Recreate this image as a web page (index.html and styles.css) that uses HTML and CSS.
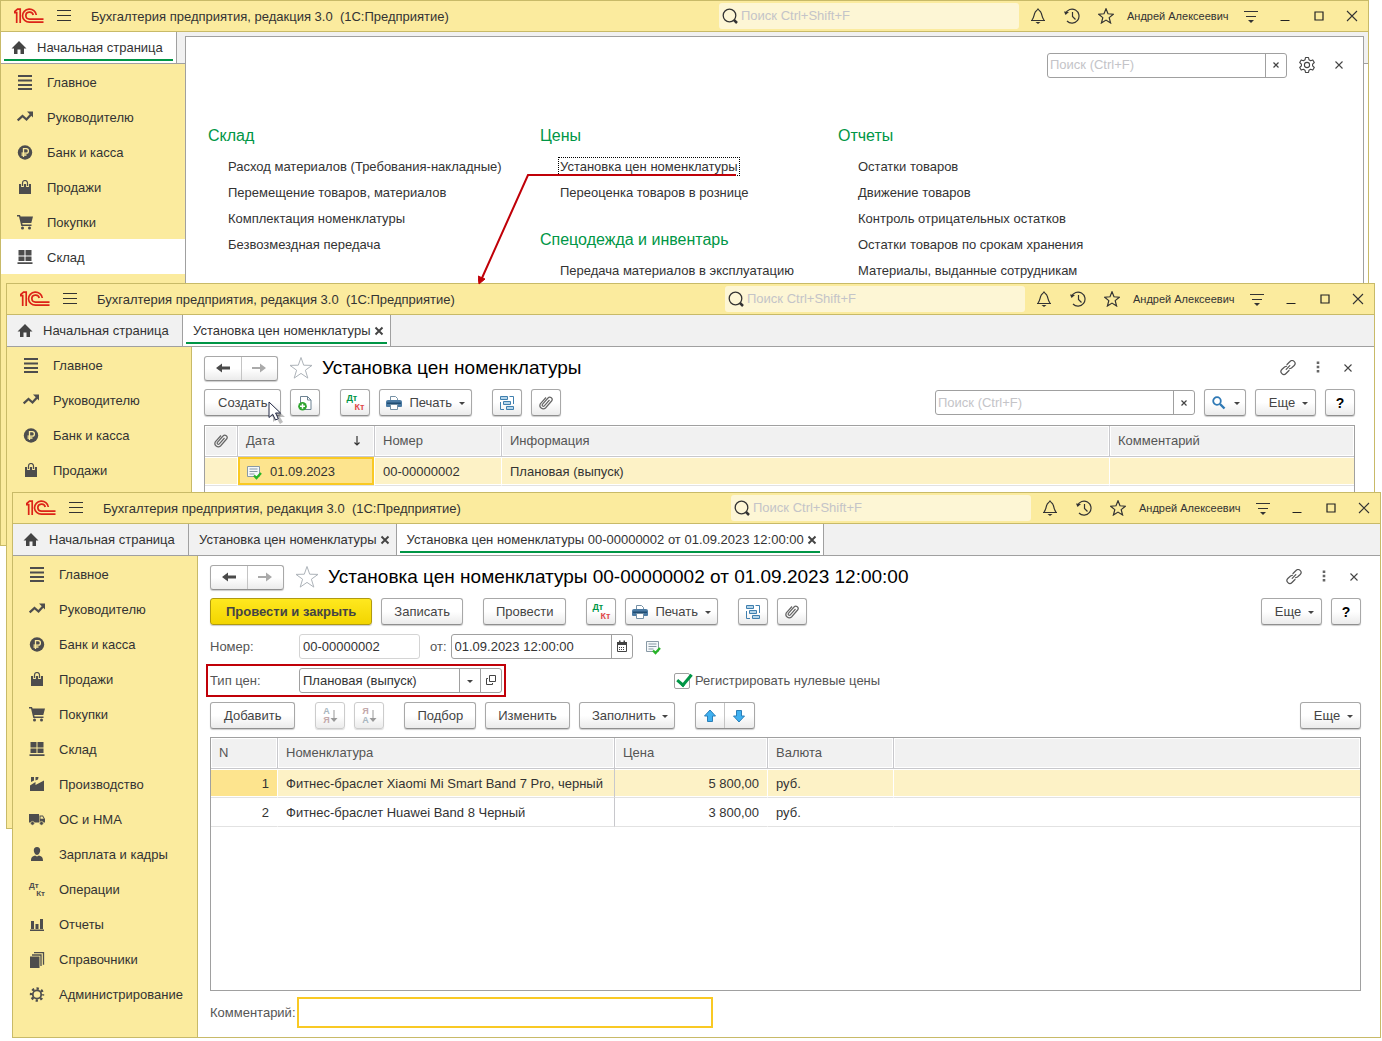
FILE: index.html
```html
<!DOCTYPE html>
<html lang="ru">
<head>
<meta charset="utf-8">
<title>Бухгалтерия предприятия</title>
<link rel="stylesheet" href="styles.css">
</head>
<body>
<svg class="sprite" aria-hidden="true">
  <symbol id="logo" viewBox="0 0 30 16"><g fill="none" stroke="#dc2318" stroke-width="1.700"><path d="M0 4.700h2.700V15M0 4.200L3.600 1.200H6.200V15"/><path d="M22.300 7A6.900 6.500 0 1 0 15.500 14.200H29.500"/><path d="M19.200 7A3.700 3.500 0 1 0 15.500 11.100H29.500"/></g></symbol>
  <symbol id="burger" viewBox="0 0 16 16"><path d="M1 2.500h14M1 7.500h14M1 12.500h14" stroke="#333"/></symbol>
  <symbol id="lens" viewBox="0 0 16 16"><g fill="none" stroke="#333"><circle cx="7.500" cy="7.500" r="6.300" stroke-width="1.300"/><path d="M12 12l3 3" stroke-width="2.500"/></g></symbol>
  <symbol id="bell" viewBox="0 0 16 16"><path d="M1 12.500h14M2 12C4 10 4 6.500 5 4.500 5.700 3 7 2.500 8 1c1 1.500 2.300 2 3 3.500 1 2 1 5.500 3 7.500" fill="none" stroke="#333" stroke-width="1.200"/><path d="M5.500 14h5L8 16z" fill="#333"/></symbol>
  <symbol id="history" viewBox="0 0 16 16"><path d="M1.500 5.500A7 7 0 1 1 3 13M8.500 4v4.500l3 3" fill="none" stroke="#333" stroke-width="1.200"/><path d="M0 3.500l5 .5-3.500 3z" fill="#333"/></symbol>
  <symbol id="star" viewBox="0 0 16 16"><path d="M8 .8l2 5 5.300.4-4.100 3.400 1.400 5.400L8 12.100 3.400 15l1.400-5.400L.7 6.200 6 5.800z" fill="none" stroke="currentColor" stroke-width="1.200"/></symbol>
  <symbol id="bigstar" viewBox="0 0 24 24"><path d="M12 1.500l2.700 7.700 8.300.2-6.600 4.800 2.400 7.900L12 17.400l-6.800 4.700 2.400-7.900L1 9.400l8.300-.2z" fill="none" stroke="#adb3b9"/></symbol>
  <symbol id="funnel" viewBox="0 0 16 16"><path d="M1 3.500h14M3 8.500h10" stroke="#333"/><path d="M5 12h6l-3 3z" fill="#333"/></symbol>
  <symbol id="min" viewBox="0 0 16 16"><path d="M3.500 12.500h9" stroke="#222"/></symbol>
  <symbol id="max" viewBox="0 0 16 16"><path d="M4 4h8v8H4z" fill="none" stroke="#222" stroke-width="1.200"/></symbol>
  <symbol id="close" viewBox="0 0 16 16"><path d="M3 3l10 10M13 3L3 13" stroke="#333" stroke-width="1.100"/></symbol>
  <symbol id="x" viewBox="0 0 16 16"><path d="M4.500 4.500l7 7M11.500 4.500l-7 7" stroke="#444" stroke-width="1.100"/></symbol>
  <symbol id="xs" viewBox="0 0 16 16"><path d="M5.500 5.500l5 5M10.500 5.500l-5 5" stroke="#444" stroke-width="1.200"/></symbol>
  <symbol id="xb" viewBox="0 0 16 16"><path d="M4.500 4.500l7 7M11.500 4.500l-7 7" stroke="#444" stroke-width="1.900"/></symbol>
  <symbol id="home" viewBox="0 0 16 16"><path d="M8 1l7.500 7.500H13V14H9.500V9.500h-3V14H3V8.500H.5z" fill="#444"/></symbol>
  <symbol id="list" viewBox="0 0 16 16"><path d="M1 1h14M1 5.500h14M1 10h14M1 14h14" stroke="#4d4d4d" stroke-width="2"/></symbol>
  <symbol id="trend" viewBox="0 0 16 16"><path d="M.7 10.500L5.500 6l4 3.500L14 4.500" fill="none" stroke="#4d4d4d" stroke-width="2.300"/><path d="M10 1.500h6v6z" fill="#4d4d4d"/></symbol>
  <symbol id="ruble" viewBox="0 0 16 16"><circle cx="8" cy="7.500" r="7.200" fill="#4d4d4d"/><path d="M6.500 12V3.700h2.700a2.200 2.200 0 0 1 0 4.400H4.500M4.500 10h5" fill="none" stroke="#fbeb9e" stroke-width="1.300"/></symbol>
  <symbol id="bag" viewBox="0 0 16 16"><path d="M2 4h12v10H2z" fill="#4d4d4d"/><path d="M5.500 7V3a2.500 2.500 0 0 1 5 0v4" fill="none" stroke="#fbeb9e" stroke-width="2.800"/><path d="M5.500 6V3a2.500 2.500 0 0 1 5 0v3" fill="none" stroke="#4d4d4d" stroke-width="1.200"/></symbol>
  <symbol id="cart" viewBox="0 0 16 16"><path d="M0 0h3l.6 1.500H16L14.300 8H5.200l.4 1.500h8.900V11H4.300L2 1.500H0z" fill="#4d4d4d"/><circle cx="5.500" cy="13" r="1.500" fill="#4d4d4d"/><circle cx="12.500" cy="13" r="1.500" fill="#4d4d4d"/></symbol>
  <symbol id="boxes" viewBox="0 0 16 16"><path d="M1.500 0h6v5.500h-6zM8.500 0h6v5.500h-6zM1.500 6.500h6V11h-6zM8.500 6.500h6V11h-6zM.5 12.300h15V14H.5z" fill="#4d4d4d"/></symbol>
  <symbol id="factory" viewBox="0 0 16 16"><path d="M1 8.500L6.500 5v3L15 3.500V14H1zM2 0h3v3.500L2 5zM6.500 0h3L9 2.500 6.500 3.500z" fill="#4d4d4d"/></symbol>
  <symbol id="truck" viewBox="0 0 16 16"><path d="M0 2h10v8.500H0zM10.500 3.500H14l2 3.500v3.500h-5.500z" fill="#4d4d4d"/><path d="M11.500 4.500h2l1.200 2.300h-3.200z" fill="#fbeb9e"/><circle cx="3.500" cy="11.300" r="1.900" fill="#4d4d4d" stroke="#fbeb9e" stroke-width=".6"/><circle cx="12.500" cy="11.300" r="1.900" fill="#4d4d4d" stroke="#fbeb9e" stroke-width=".6"/></symbol>
  <symbol id="person" viewBox="0 0 16 16"><path d="M8 0c2.200 0 3.200 1.300 3.200 3.300S10 8 8 8 4.800 5.300 4.800 3.300 5.800 0 8 0zM2 14c0-3.500 1-4.500 4-5.500l2 1 2-1c3 1 4 2 4 5.500z" fill="#4d4d4d"/></symbol>
  <symbol id="bars" viewBox="0 0 16 16"><path d="M1 12.500h14V14H1zM2 4h3v8H2zM6.500 7h3v5h-3zM11 2h3v10h-3z" fill="#4d4d4d"/></symbol>
  <symbol id="books" viewBox="0 0 16 16"><path d="M1 4.500h9.500V16H1z" fill="#4d4d4d"/><path d="M3 3h9v11M5 .7h9.500v12" fill="none" stroke="#4d4d4d" stroke-width="1.300"/></symbol>
  <symbol id="cog" viewBox="0 0 16 16"><circle cx="8" cy="7.500" r="6" fill="none" stroke="#4d4d4d" stroke-width="2.400" stroke-dasharray="2.350 2.362" stroke-dashoffset="1.200"/><circle cx="8" cy="7.500" r="4.200" fill="none" stroke="#4d4d4d" stroke-width="1.800"/></symbol>
  <symbol id="gear" viewBox="0 0 18 18"><g fill="none" stroke="#444" stroke-width="1.100" stroke-linejoin="round"><path d="M7.500 1.500h3l.5 2.300 1.600.9 2.200-.8 1.500 2.600-1.700 1.600v1.800l1.700 1.600-1.500 2.600-2.200-.8-1.600.9-.5 2.300h-3L7 14.200l-1.600-.9-2.200.8-1.500-2.600 1.700-1.600V8.100L1.700 6.500l1.500-2.600 2.200.8L7 3.800z"/><circle cx="9" cy="9" r="2.600"/></g></symbol>
  <symbol id="left" viewBox="0 0 16 16"><path d="M1 8l6-4.500v3h8v3H7v3z" fill="#4a4a4a"/></symbol>
  <symbol id="right" viewBox="0 0 16 16"><path d="M15 8L9 3.500V7H1v2h8v3.500z" fill="#aaa"/></symbol>
  <symbol id="link" viewBox="0 0 16 16"><g fill="none" stroke="#555" stroke-width="1.200" stroke-linecap="round"><path d="M7 4.500l3-3a2.900 2.900 0 0 1 4.200 4L11.500 8l-2 .7M9 10.500l-3 3a2.900 2.900 0 0 1-4.200-4L4.500 7l2-.7M6.200 9.300L9.800 5.700"/></g></symbol>
  <symbol id="dots" viewBox="0 0 16 16"><path d="M6.700 1.500h2.600v2.600H6.700zM6.700 5.700h2.600v2.600H6.700zM6.700 9.900h2.600v2.600H6.700z" fill="#666"/></symbol>
  <symbol id="newdoc" viewBox="0 0 16 16"><path d="M3.500 1.500h7L14 5v9.500H3.500zM10.500 1.500V5H14" fill="#fff" stroke="#6d8292"/><circle cx="5.500" cy="11.300" r="4.300" fill="#2fa52f"/><path d="M5.500 8.800v5M3 11.300h5" stroke="#fff" stroke-width="1.500"/></symbol>
  <symbol id="printer" viewBox="0 0 16 16"><path d="M4.500 6V1.500h5l2 2V6" fill="#fff" stroke="#7590a5"/><path d="M2 5h12a2 2 0 0 1 2 2v4a1 1 0 0 1-1 1H1a1 1 0 0 1-1-1V7a2 2 0 0 1 2-2z" fill="#4a7aa3"/><path d="M1 7.500h14V9H1z" fill="#204d72"/><path d="M4.500 9.500h7v5h-7z" fill="#fff" stroke="#7590a5"/></symbol>
  <symbol id="tree" viewBox="0 0 16 16"><g fill="#b5d5ea" stroke="#3f7fae"><path d="M1.500 1.500h7v3h-7zM4.500 6.500h7v3h-7zM7.500 11.500h7v3h-7z"/><path d="M10.500 1.500h4V9M1.500 7v7.500H5" fill="none"/></g></symbol>
  <symbol id="clip" viewBox="0 0 16 16"><path d="M11.500 5L6.300 10.800a1.200 1.200 0 0 1-1.900-1.500L10 3a2.300 2.300 0 0 1 3.600 3L7.500 13a3.400 3.400 0 0 1-5.200-4.200L8 2.500" fill="none" stroke="#666" stroke-width="1.200"/></symbol>
  <symbol id="find" viewBox="0 0 16 16"><circle cx="6" cy="6" r="3.800" fill="none" stroke="#2f79b5" stroke-width="1.800"/><path d="M9 9l4.500 4.500" stroke="#2f79b5" stroke-width="2.400"/></symbol>
  <symbol id="posted" viewBox="0 0 16 16"><path d="M1.500 2.500h12v10h-12z" fill="#f5f8fa" stroke="#8899a5"/><path d="M3.500 5h8M3.500 7.500h8M3.500 10h5" stroke="#8899a5"/><path d="M8 11.500l2.500 2.500L15 9" fill="none" stroke="#28b428" stroke-width="2.300"/></symbol>
  <symbol id="caret" viewBox="0 0 6 16"><path d="M0 7h6L3 10z" fill="#444"/></symbol>
  <symbol id="cal" viewBox="0 0 16 16"><path d="M3.500 3.500h9v9h-9z" fill="#fff" stroke="#444"/><path d="M3 3h10v3H3zM5 1.500h1.500V4H5zM9.500 1.500H11V4H9.500z" fill="#444"/><path d="M5 8.500h6M5 10.500h6" stroke="#444" stroke-dasharray="1 1"/></symbol>
  <symbol id="open" viewBox="0 0 16 16"><path d="M6.500 2.500h6v6h-6zM5 5.500H3.500v6h6V10" fill="none" stroke="#444"/></symbol>
  <symbol id="fall" viewBox="0 0 8 18"><path d="M4 3v11" stroke="#999"/><path d="M.5 11h7L4 15z" fill="#999"/></symbol>
  <symbol id="up" viewBox="0 0 16 16"><path d="M8 2l5.500 6H10.500v5.500h-5V8H2.500z" fill="#3fb0f0" stroke="#2a7fb8"/></symbol>
  <symbol id="down" viewBox="0 0 16 16"><path d="M8 14L2.500 8h3V2.500h5V8h3z" fill="#3fb0f0" stroke="#2a7fb8"/></symbol>
  <symbol id="sort" viewBox="0 0 8 16"><path d="M4 3v9M1.500 9.500L4 12l2.500-2.500" fill="none" stroke="#333" stroke-width="1.200"/></symbol>
</svg>

<main class="desktop">
  <section class="window window-back">
    <header class="titlebar">
      <svg class="logo"><use href="#logo"/></svg>
      <button class="tool burger" aria-label="Меню"><svg class="i16"><use href="#burger"/></svg></button>
      <h1 class="app-name">Бухгалтерия предприятия, редакция 3.0  (1С:Предприятие)</h1>
      <label class="global-search"><svg class="i16"><use href="#lens"/></svg><input type="text" placeholder="Поиск Ctrl+Shift+F"></label>
      <button class="tool" aria-label="Уведомления"><svg class="i16"><use href="#bell"/></svg></button>
      <button class="tool" aria-label="История"><svg class="i16"><use href="#history"/></svg></button>
      <button class="tool" aria-label="Избранное"><svg class="i16"><use href="#star"/></svg></button>
      <a class="user" href="#">Андрей Алексеевич</a>
      <button class="tool" aria-label="Настройки"><svg class="i16"><use href="#funnel"/></svg></button>
      <button class="tool" aria-label="Свернуть"><svg class="i16"><use href="#min"/></svg></button>
      <button class="tool" aria-label="Развернуть"><svg class="i16"><use href="#max"/></svg></button>
      <button class="tool tool-last" aria-label="Закрыть"><svg class="i16"><use href="#close"/></svg></button>
    </header>
    <nav class="tabs">
      <a class="tab home active" href="#"><svg class="i16"><use href="#home"/></svg>Начальная страница</a>
    </nav>
    <div class="body">
      <nav class="sidebar">
        <a href="#"><svg class="i16"><use href="#list"/></svg>Главное</a>
        <a href="#"><svg class="i16"><use href="#trend"/></svg>Руководителю</a>
        <a href="#"><svg class="i16"><use href="#ruble"/></svg>Банк и касса</a>
        <a href="#"><svg class="i16"><use href="#bag"/></svg>Продажи</a>
        <a href="#"><svg class="i16"><use href="#cart"/></svg>Покупки</a>
        <a class="current" href="#"><svg class="i16"><use href="#boxes"/></svg>Склад</a>
      </nav>
    </div>
    <div class="menu-panel">
      <div class="menu-tools">
        <div class="field menu-search"><input type="text" placeholder="Поиск (Ctrl+F)" aria-label="Поиск"><button aria-label="Очистить"><svg class="i16"><use href="#xs"/></svg></button></div>
        <button class="tool" aria-label="Настройка"><svg class="i18"><use href="#gear"/></svg></button>
        <button class="tool" aria-label="Закрыть"><svg class="i16"><use href="#x"/></svg></button>
      </div>
      <div class="menu-columns">
        <div>
          <section class="menu-group"><h2>Склад</h2>
            <a href="#">Расход материалов (Требования-накладные)</a>
            <a href="#">Перемещение товаров, материалов</a>
            <a href="#">Комплектация номенклатуры</a>
            <a href="#">Безвозмездная передача</a>
          </section>
        </div>
        <div>
          <section class="menu-group"><h2>Цены</h2>
            <a href="#"><span class="focused">Установка цен номенклатуры</span></a>
            <a href="#">Переоценка товаров в рознице</a>
          </section>
          <section class="menu-group"><h2>Спецодежда и инвентарь</h2>
            <a href="#">Передача материалов в эксплуатацию</a>
          </section>
        </div>
        <div>
          <section class="menu-group"><h2>Отчеты</h2>
            <a href="#">Остатки товаров</a>
            <a href="#">Движение товаров</a>
            <a href="#">Контроль отрицательных остатков</a>
            <a href="#">Остатки товаров по срокам хранения</a>
            <a href="#">Материалы, выданные сотрудникам</a>
          </section>
        </div>
      </div>
    </div>
  </section>

  <section class="window window-middle">
    <header class="titlebar">
      <svg class="logo"><use href="#logo"/></svg>
      <button class="tool burger" aria-label="Меню"><svg class="i16"><use href="#burger"/></svg></button>
      <h1 class="app-name">Бухгалтерия предприятия, редакция 3.0  (1С:Предприятие)</h1>
      <label class="global-search"><svg class="i16"><use href="#lens"/></svg><input type="text" placeholder="Поиск Ctrl+Shift+F"></label>
      <button class="tool" aria-label="Уведомления"><svg class="i16"><use href="#bell"/></svg></button>
      <button class="tool" aria-label="История"><svg class="i16"><use href="#history"/></svg></button>
      <button class="tool" aria-label="Избранное"><svg class="i16"><use href="#star"/></svg></button>
      <a class="user" href="#">Андрей Алексеевич</a>
      <button class="tool" aria-label="Настройки"><svg class="i16"><use href="#funnel"/></svg></button>
      <button class="tool" aria-label="Свернуть"><svg class="i16"><use href="#min"/></svg></button>
      <button class="tool" aria-label="Развернуть"><svg class="i16"><use href="#max"/></svg></button>
      <button class="tool tool-last" aria-label="Закрыть"><svg class="i16"><use href="#close"/></svg></button>
    </header>
    <nav class="tabs">
      <a class="tab home" href="#"><svg class="i16"><use href="#home"/></svg>Начальная страница</a>
      <a class="tab active" href="#">Установка цен номенклатуры<svg class="i16"><use href="#xb"/></svg></a>
    </nav>
    <div class="body">
      <nav class="sidebar">
        <a href="#"><svg class="i16"><use href="#list"/></svg>Главное</a>
        <a href="#"><svg class="i16"><use href="#trend"/></svg>Руководителю</a>
        <a href="#"><svg class="i16"><use href="#ruble"/></svg>Банк и касса</a>
        <a href="#"><svg class="i16"><use href="#bag"/></svg>Продажи</a>
      </nav>
      <div class="content">
        <div class="heading">
          <div class="pair nav-pair"><button aria-label="Назад"><svg class="i16"><use href="#left"/></svg></button><button aria-label="Вперед"><svg class="i16"><use href="#right"/></svg></button></div>
          <svg class="big-star"><use href="#bigstar"/></svg>
          <h2>Установка цен номенклатуры</h2>
          <button class="tool" aria-label="Ссылка"><svg class="i16"><use href="#link"/></svg></button>
          <button class="tool" aria-label="Еще"><svg class="i16"><use href="#dots"/></svg></button>
          <button class="tool" aria-label="Закрыть"><svg class="i16"><use href="#x"/></svg></button>
        </div>
        <div class="toolbar">
          <div class="group"><button class="btn lead">Создать</button><button class="btn icon" aria-label="Скопировать"><svg class="i16"><use href="#newdoc"/></svg></button></div>
          <div class="group"><button class="btn icon"><span class="dtkt color"><b>Дт</b><b>Кт</b></span></button><button class="btn print"><svg class="i16"><use href="#printer"/></svg>Печать<svg class="caret"><use href="#caret"/></svg></button></div>
          <div class="group"><button class="btn icon" aria-label="Структура"><svg class="i16"><use href="#tree"/></svg></button><button class="btn icon" aria-label="Файлы"><svg class="i16"><use href="#clip"/></svg></button></div>
          <div class="group end">
            <div class="field list-search"><input type="text" placeholder="Поиск (Ctrl+F)" aria-label="Поиск"><button aria-label="Очистить"><svg class="i16"><use href="#xs"/></svg></button></div>
            <button class="btn find" aria-label="Найти"><svg class="i16"><use href="#find"/></svg><svg class="caret"><use href="#caret"/></svg></button>
            <button class="btn more">Еще<svg class="caret"><use href="#caret"/></svg></button>
            <button class="btn icon help">?</button>
          </div>
        </div>
        <div class="grid">
          <table>
            <colgroup><col class="c-clip"><col class="c-date"><col class="c-num"><col><col class="c-comment"></colgroup>
            <thead><tr><th class="mid"><svg class="i16"><use href="#clip"/></svg></th><th><span class="sortable">Дата<svg class="sort"><use href="#sort"/></svg></span></th><th>Номер</th><th>Информация</th><th>Комментарий</th></tr></thead>
            <tbody><tr class="selected"><td></td><td class="cursor-cell"><span class="with-icon"><svg class="i16"><use href="#posted"/></svg>01.09.2023</span></td><td>00-00000002</td><td>Плановая (выпуск)</td><td></td></tr></tbody>
          </table>
        </div>
      </div>
    </div>
  </section>

  <section class="window window-front">
    <header class="titlebar">
      <svg class="logo"><use href="#logo"/></svg>
      <button class="tool burger" aria-label="Меню"><svg class="i16"><use href="#burger"/></svg></button>
      <h1 class="app-name">Бухгалтерия предприятия, редакция 3.0  (1С:Предприятие)</h1>
      <label class="global-search"><svg class="i16"><use href="#lens"/></svg><input type="text" placeholder="Поиск Ctrl+Shift+F"></label>
      <button class="tool" aria-label="Уведомления"><svg class="i16"><use href="#bell"/></svg></button>
      <button class="tool" aria-label="История"><svg class="i16"><use href="#history"/></svg></button>
      <button class="tool" aria-label="Избранное"><svg class="i16"><use href="#star"/></svg></button>
      <a class="user" href="#">Андрей Алексеевич</a>
      <button class="tool" aria-label="Настройки"><svg class="i16"><use href="#funnel"/></svg></button>
      <button class="tool" aria-label="Свернуть"><svg class="i16"><use href="#min"/></svg></button>
      <button class="tool" aria-label="Развернуть"><svg class="i16"><use href="#max"/></svg></button>
      <button class="tool tool-last" aria-label="Закрыть"><svg class="i16"><use href="#close"/></svg></button>
    </header>
    <nav class="tabs">
      <a class="tab home" href="#"><svg class="i16"><use href="#home"/></svg>Начальная страница</a>
      <a class="tab" href="#">Установка цен номенклатуры<svg class="i16"><use href="#xb"/></svg></a>
      <a class="tab active" href="#">Установка цен номенклатуры 00-00000002 от 01.09.2023 12:00:00<svg class="i16"><use href="#xb"/></svg></a>
    </nav>
    <div class="body">
      <nav class="sidebar">
        <a href="#"><svg class="i16"><use href="#list"/></svg>Главное</a>
        <a href="#"><svg class="i16"><use href="#trend"/></svg>Руководителю</a>
        <a href="#"><svg class="i16"><use href="#ruble"/></svg>Банк и касса</a>
        <a href="#"><svg class="i16"><use href="#bag"/></svg>Продажи</a>
        <a href="#"><svg class="i16"><use href="#cart"/></svg>Покупки</a>
        <a href="#"><svg class="i16"><use href="#boxes"/></svg>Склад</a>
        <a href="#"><svg class="i16"><use href="#factory"/></svg>Производство</a>
        <a href="#"><svg class="i16"><use href="#truck"/></svg>ОС и НМА</a>
        <a href="#"><svg class="i16"><use href="#person"/></svg>Зарплата и кадры</a>
        <a href="#"><span class="dtkt small"><b>Дт</b><b>Кт</b></span>Операции</a>
        <a href="#"><svg class="i16"><use href="#bars"/></svg>Отчеты</a>
        <a href="#"><svg class="i16"><use href="#books"/></svg>Справочники</a>
        <a href="#"><svg class="i16"><use href="#cog"/></svg>Администрирование</a>
      </nav>
      <div class="content">
        <div class="heading">
          <div class="pair nav-pair"><button aria-label="Назад"><svg class="i16"><use href="#left"/></svg></button><button aria-label="Вперед"><svg class="i16"><use href="#right"/></svg></button></div>
          <svg class="big-star"><use href="#bigstar"/></svg>
          <h2>Установка цен номенклатуры 00-00000002 от 01.09.2023 12:00:00</h2>
          <button class="tool" aria-label="Ссылка"><svg class="i16"><use href="#link"/></svg></button>
          <button class="tool" aria-label="Еще"><svg class="i16"><use href="#dots"/></svg></button>
          <button class="tool" aria-label="Закрыть"><svg class="i16"><use href="#x"/></svg></button>
        </div>
        <div class="toolbar">
          <div class="group"><button class="btn primary">Провести и закрыть</button><button class="btn">Записать</button></div>
          <div class="group"><button class="btn">Провести</button></div>
          <div class="group"><button class="btn icon"><span class="dtkt color"><b>Дт</b><b>Кт</b></span></button><button class="btn print"><svg class="i16"><use href="#printer"/></svg>Печать<svg class="caret"><use href="#caret"/></svg></button></div>
          <div class="group"><button class="btn icon" aria-label="Структура"><svg class="i16"><use href="#tree"/></svg></button><button class="btn icon" aria-label="Файлы"><svg class="i16"><use href="#clip"/></svg></button></div>
          <div class="group end"><button class="btn more">Еще<svg class="caret"><use href="#caret"/></svg></button><button class="btn icon help">?</button></div>
        </div>
        <div class="form-row">
          <label class="caption" for="number">Номер:</label>
          <div class="field readonly number"><input id="number" type="text" value="00-00000002" readonly></div>
          <label class="from" for="date">от:</label>
          <div class="field date"><input id="date" type="text" value="01.09.2023 12:00:00"><button aria-label="Календарь"><svg class="i16"><use href="#cal"/></svg></button></div>
          <svg class="i16 state"><use href="#posted"/></svg>
        </div>
        <div class="form-row price-row">
          <div class="marked">
            <label class="caption" for="price">Тип цен:</label>
            <div class="field price"><input id="price" type="text" value="Плановая (выпуск)"><button aria-label="Выбрать"><svg class="caret"><use href="#caret"/></svg></button><button aria-label="Открыть"><svg class="i16"><use href="#open"/></svg></button></div>
          </div>
          <label class="check"><input type="checkbox" checked>Регистрировать нулевые цены</label>
        </div>
        <div class="toolbar">
          <div class="group"><button class="btn lead">Добавить</button></div>
          <div class="group"><button class="btn icon off"><span class="order"><b>А</b><b>Я</b></span><svg class="fall"><use href="#fall"/></svg></button><button class="btn icon off"><span class="order reverse"><b>Я</b><b>А</b></span><svg class="fall"><use href="#fall"/></svg></button></div>
          <div class="group"><button class="btn">Подбор</button><button class="btn">Изменить</button><button class="btn drop">Заполнить<svg class="caret"><use href="#caret"/></svg></button></div>
          <div class="group"><div class="pair move-pair"><button aria-label="Вверх"><svg class="i16"><use href="#up"/></svg></button><button aria-label="Вниз"><svg class="i16"><use href="#down"/></svg></button></div></div>
          <div class="group end"><button class="btn more">Еще<svg class="caret"><use href="#caret"/></svg></button></div>
        </div>
        <div class="grid items">
          <table>
            <colgroup><col class="c-n"><col class="c-item"><col class="c-price"><col class="c-cur"><col></colgroup>
            <thead><tr><th>N</th><th>Номенклатура</th><th>Цена</th><th>Валюта</th><th></th></tr></thead>
            <tbody>
              <tr class="selected"><td class="num strong">1</td><td class="fixed">Фитнес-браслет Xiaomi Mi Smart Band 7 Pro, черный</td><td class="num">5 800,00</td><td>руб.</td><td></td></tr>
              <tr><td class="num">2</td><td class="fixed">Фитнес-браслет Huawei Band 8 Черный</td><td class="num">3 800,00</td><td>руб.</td><td></td></tr>
            </tbody>
          </table>
        </div>
        <div class="comment-row"><label for="comment">Комментарий:</label><input id="comment" type="text"></div>
      </div>
    </div>
  </section>

  <svg class="callout" viewBox="0 0 260 114"><path d="M258 3H50L4 106" fill="none" stroke="#c00008" stroke-width="2"/><path d="M1 112l-1-8 7 3z" fill="#c00008" stroke="#c00008"/></svg>
  <svg class="pointer" viewBox="0 0 18 24"><path d="M5 5v16l4-3 3 5 3-2-3-5h5z" fill="#000" opacity=".25"/><path d="M1 1v15.500l3.700-3.300 2.800 5.800 2.800-1.300-2.700-5.700h4.900z" fill="#fff" stroke="#222844"/></svg>
</main>
</body>
</html>
```
FILE: styles.css
```css
* { box-sizing: border-box; }
body { margin: 0; background: #fff; color: #333; font: 13px/16px "Liberation Sans", Arial, sans-serif; }
a { color: inherit; text-decoration: none; }
h1, h2 { margin: 0; font-weight: normal; }
button, input { font: inherit; color: inherit; }
button { padding: 0; border: 0; background: none; }
svg { display: block; flex: none; }
input { border: 0; padding: 0; background: none; min-width: 0; outline: none; }
input::placeholder { color: #c4c4c8; opacity: 1; }
.sprite { position: absolute; width: 0; height: 0; }
.i16 { width: 16px; height: 16px; }
.i18 { width: 18px; height: 18px; }
.caret { width: 6px; height: 16px; }

/* Debit and credit letters */
.dtkt { display: flex; flex-direction: column; flex: none; width: 18px; font-size: 9px; line-height: 9px; }
.dtkt b:first-child { align-self: flex-start; }
.dtkt b:last-child { align-self: flex-end; }
.dtkt.small { width: 16px; font-size: 8px; line-height: 8px; color: #4d4d4d; }
.color b:first-child { color: #009646; }
.color b:last-child { color: #e0484a; }
.order { display: flex; flex-direction: column; width: 8px; font-size: 9px; line-height: 9px; color: #a9b6c0; }
.order b:last-child, .order.reverse b:first-child { color: #c3a9ab; }
.order.reverse b:last-child { color: #a9b6c0; }
.fall { width: 8px; height: 18px; }

/* Desktop with three overlapping windows */
.desktop { position: relative; min-width: 1200px; min-height: 1041px; overflow: hidden; }
.window { position: absolute; display: flex; flex-direction: column; min-height: 546px; background: #fff; border: 1px solid #c8ba68; }
.window-back { left: 0; right: 13px; top: 0; }
.window-middle { left: 6px; right: 7px; top: 283px; }
.window-front { left: 12px; right: 1px; top: 492px; }

.titlebar { display: flex; align-items: center; height: 31px; background: #fbeb9e; border-bottom: 1px solid #c8ba68; }
.logo { width: 30px; height: 16px; margin-left: 13px; }
.tool { display: flex; align-items: center; justify-content: center; width: 34px; height: 26px; color: #333; }
.tool-last { width: 32px; }
.burger { margin-left: 3px; }
.app-name { margin-left: 10px; padding-top: 1px; font-size: 13px; white-space: pre; }
.global-search { display: flex; align-items: center; width: 300px; height: 26px; margin: 0 2px 0 auto; padding-left: 3px; gap: 3px; background: #fdf6d5; border-radius: 3px; }
.global-search input { flex: 1; }
.user { width: 111px; padding-left: 4px; font-size: 11px; white-space: nowrap; }

.tabs { display: flex; height: 32px; background: #f1f1f1; border-bottom: 1px solid #a0a0a0; }
.tab { position: relative; display: flex; align-items: center; padding: 0 3px 0 10px; border-right: 1px solid #a0a0a0; white-space: nowrap; }
.tab.home { width: 176px; gap: 10px; }
.tab.active { background: #fff; }
.tab.active::after { content: ""; position: absolute; left: 3px; right: 3px; bottom: 2px; height: 2px; background: #009646; }

.body { flex: 1; display: flex; }
.sidebar { flex: none; width: 185px; background: #fbeb9e; border-right: 1px solid #c8ba68; }
.sidebar a { display: flex; align-items: center; height: 35px; padding: 2px 0 0 16px; gap: 14px; }
.sidebar .current { background: #fff; }

/* Section menu */
.menu-panel { position: absolute; left: 184px; right: 4px; top: 35px; bottom: 0; background: #fff; border: 1px solid #a0a0a0; border-bottom: 0; }
.menu-tools { display: flex; justify-content: flex-end; align-items: center; padding: 15px 8px 0 0; }
.menu-search { width: 240px; margin-right: 4px; }
.menu-tools .tool { width: 32px; }
.menu-columns { display: grid; grid-template-columns: 332px 298px 1fr; padding: 40px 0 0 22px; }
.menu-group { margin-bottom: 16px; }
.menu-group h2 { font-size: 16px; line-height: 36px; color: #009646; }
.menu-group a { display: block; padding-left: 20px; line-height: 26px; white-space: nowrap; }
.focused { outline: 1px dotted #000; outline-offset: 1px; }

/* Form area */
.content { flex: 1; min-width: 0; display: flex; flex-direction: column; padding: 8px 19px 9px 12px; }
.heading { display: flex; align-items: center; height: 26px; }
.heading h2 { flex: 1; margin-left: 9px; font-size: 19px; line-height: 24px; color: #000; white-space: nowrap; }
.heading .tool { width: 30px; }
.heading .tool:last-child { margin-right: -8px; }
.big-star { width: 24px; height: 24px; margin-left: 11px; }

.pair, .btn { border: 1px solid #a8a8a8; border-bottom-color: #8f8f8f; border-radius: 3px; background: linear-gradient(#fff 50%, #ebebeb); box-shadow: 0 1px 1px #ccc; }
.pair { display: flex; }
.pair button { flex: 1; display: flex; align-items: center; justify-content: center; }
.pair button + button { border-left: 1px solid #c4c4c4; }
.nav-pair { width: 74px; height: 25px; }
.move-pair { width: 60px; height: 27px; }
.btn { display: flex; align-items: center; justify-content: center; height: 27px; padding: 0 12px; color: #444; white-space: nowrap; }
.btn.lead { padding: 0 13px; }
.btn.icon { width: 30px; padding: 0; }
.btn.print { padding: 0 6px; gap: 7px; }
.btn.drop { padding-right: 6px; gap: 6px; }
.btn.find { width: 42px; padding: 0; gap: 7px; }
.btn.more { width: 61px; padding: 0 6px 0 12px; gap: 7px; }
.btn.help { color: #000; font-size: 14px; font-weight: bold; }
.btn.primary { padding: 0 15px; background: linear-gradient(#ffe81f, #f2d500); border-color: #b09a10; font-weight: bold; }
.btn.off { border-color: #ccc; box-shadow: 0 1px 1px #ddd; }
.toolbar { display: flex; gap: 20px; margin-top: 8px; height: 27px; }
.group { display: flex; gap: 9px; }
.group.end { margin-left: auto; }

.field { display: flex; height: 25px; background: #fff; border: 1px solid #a0a0a0; border-radius: 3px; }
.field input { flex: 1; padding-left: 3px; }
.field button { display: flex; align-items: center; justify-content: center; width: 21px; border-left: 1px solid #a0a0a0; }
.list-search { width: 260px; margin-top: 1px; }
.list-search input, .menu-search input { padding-left: 2px; }
.readonly { border-color: #d4d4d4; }

.form-row { display: flex; align-items: center; height: 25px; margin-top: 9px; }
.form-row label { color: #555; }
.caption { width: 89px; }
.number { width: 121px; }
.from { margin: 0 4px 0 10px; }
.date { width: 182px; }
.state { margin-left: 12px; }
.marked { display: flex; align-items: center; width: 300px; height: 33px; margin-left: -4px; padding-left: 2px; border: 2px solid #c00008; }
.price { width: 203px; }
.check { display: flex; align-items: center; gap: 5px; margin-left: 168px; }
.check input { appearance: none; width: 16px; height: 16px; margin: 0; border: 1px solid #a0a0a0; border-radius: 2px; background: #fff; position: relative; }
.check input:checked::after { content: ""; position: absolute; left: 5px; top: -3px; width: 6px; height: 12px; border: solid #009646; border-width: 0 3px 3px 0; transform: rotate(40deg); }
.price-row + .toolbar { margin-top: 9px; }

/* Data tables */
.grid { margin-top: 9px; flex: 1; border: 1px solid #a0a0a0; }
.toolbar + .grid.items { margin-top: 8px; min-height: 254px; }
table { width: 100%; table-layout: fixed; border-collapse: separate; border-spacing: 0; }
th { height: 31px; padding: 0 8px; background: #f1f1f1; border-right: 1px solid #c8c8cc; border-bottom: 1px solid #c8c8cc; box-shadow: inset 0 0 0 1px #fff; color: #555; font-weight: normal; text-align: left; }
td { height: 29px; padding: 2px 8px 0; border-bottom: 1px solid #e2e2e2; border-right: 1px solid transparent; white-space: nowrap; }
th:last-child, td:last-child { border-right: 0; }
.selected td { background: #fdf2c6; border-right-color: #fff; box-shadow: inset 0 1px #fff, inset 0 -1px #fff; }
.selected .strong { background: #fde48e; }
.selected .cursor-cell { background: #fde48e; box-shadow: inset 0 0 0 2px #f9c924; }
.num { text-align: right; }
td.fixed, .selected td.fixed { border-right-color: #c8c8cc; }
.mid svg { margin: 0 auto; }
.mid { padding: 0; }
.sortable { display: flex; justify-content: space-between; padding-right: 5px; }
.sort { width: 8px; height: 16px; }
.with-icon { display: flex; align-items: center; gap: 8px; }
.c-clip { width: 33px; }
.c-date { width: 137px; }
.c-num { width: 127px; }
.c-comment { width: 244px; }
.c-n { width: 67px; }
.c-item { width: 337px; }
.c-price { width: 153px; }
.c-cur { width: 126px; }

.comment-row { display: flex; align-items: center; gap: 1px; margin-top: 6px; }
.comment-row label { color: #555; }
.comment-row input { width: 416px; height: 31px; padding: 0 4px; border: 2px solid #f9c924; background: #fff; }

/* Annotation over the windows */
.callout { position: absolute; left: 478px; top: 172px; width: 260px; height: 114px; pointer-events: none; }
.pointer { position: absolute; left: 268px; top: 401px; width: 18px; height: 24px; pointer-events: none; }
```
